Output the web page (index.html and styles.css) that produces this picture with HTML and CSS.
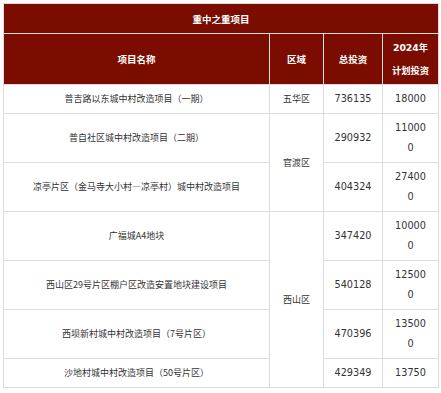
FILE: index.html
```html
<!DOCTYPE html>
<html lang="zh-CN">
<head>
<meta charset="utf-8">
<title>重中之重项目</title>
<link rel="stylesheet" href="styles.css">
</head>
<body>
<table class="proj">
  <colgroup>
    <col class="c-name">
    <col class="c-area">
    <col class="c-total">
    <col class="c-plan">
  </colgroup>
  <thead>
    <tr class="title-row"><th colspan="4">重中之重项目</th></tr>
    <tr class="head-row">
      <th>项目名称</th>
      <th>区域</th>
      <th>总投资</th>
      <th class="plan-head">2024年<br>计划投资</th>
    </tr>
  </thead>
  <tbody>
    <tr><td class="name">普吉路以东城中村改造项目（一期）</td><td class="area">五华区</td><td class="num">736135</td><td class="num">18000</td></tr>
    <tr class="two"><td class="name">普自社区城中村改造项目（二期）</td><td class="area" rowspan="2">官渡区</td><td class="num">290932</td><td class="num">110000</td></tr>
    <tr class="two"><td class="name">凉亭片区（金马寺大小村—凉亭村）城中村改造项目</td><td class="num">404324</td><td class="num">274000</td></tr>
    <tr class="two"><td class="name">广福城A4地块</td><td class="area" rowspan="4">西山区</td><td class="num">347420</td><td class="num">100000</td></tr>
    <tr class="two"><td class="name">西山区29号片区棚户区改造安置地块建设项目</td><td class="num">540128</td><td class="num">125000</td></tr>
    <tr class="two"><td class="name">西坝新村城中村改造项目（7号片区）</td><td class="num">470396</td><td class="num">135000</td></tr>
    <tr><td class="name">沙地村城中村改造项目（50号片区）</td><td class="num">429349</td><td class="num">13750</td></tr>
  </tbody>
</table>
</body>
</html>
```
FILE: styles.css
```css
html, body {
  margin: 0;
  padding: 0;
  background: #ffffff;
}
body {
  padding: 3px;
}
.proj {
  width: 435px;
  table-layout: fixed;
  border-collapse: collapse;
  border: 1px solid #dcdcdc;
  font-family: "Noto Sans CJK SC", sans-serif;
  color: #333333;
}
.c-name { width: 266px; }
.c-area { width: 54px; }
.c-total { width: 59px; }
.c-plan { width: 56px; }

.proj th {
  background: #7a0d00;
  color: #ffffff;
  font-weight: 700;
  font-size: 9.5px;
  border: 1px solid #dcdcdc;
  text-align: center;
  vertical-align: middle;
}
.title-row th {
  height: 29px;
  padding: 0;
}
.head-row th {
  height: 50px;
  padding: 0 2px;
  line-height: 23px;
}
.head-row .plan-head {
  font-family: "DejaVu Sans", "Noto Sans CJK SC", sans-serif;
  font-size: 9.3px;
}
.proj td {
  border: 1px solid #dcdcdc;
  padding: 4px 10px;
  line-height: 20px;
  text-align: center;
  vertical-align: middle;
  font-size: 9px;
}
.proj td.name {
  padding: 4px 4px;
}
.proj td.area {
  padding: 4px 2px;
}
.proj td.num {
  font-family: "DejaVu Sans", sans-serif;
  font-size: 9.7px;
  word-break: break-all;
  padding: 4px 10px;
}
```
